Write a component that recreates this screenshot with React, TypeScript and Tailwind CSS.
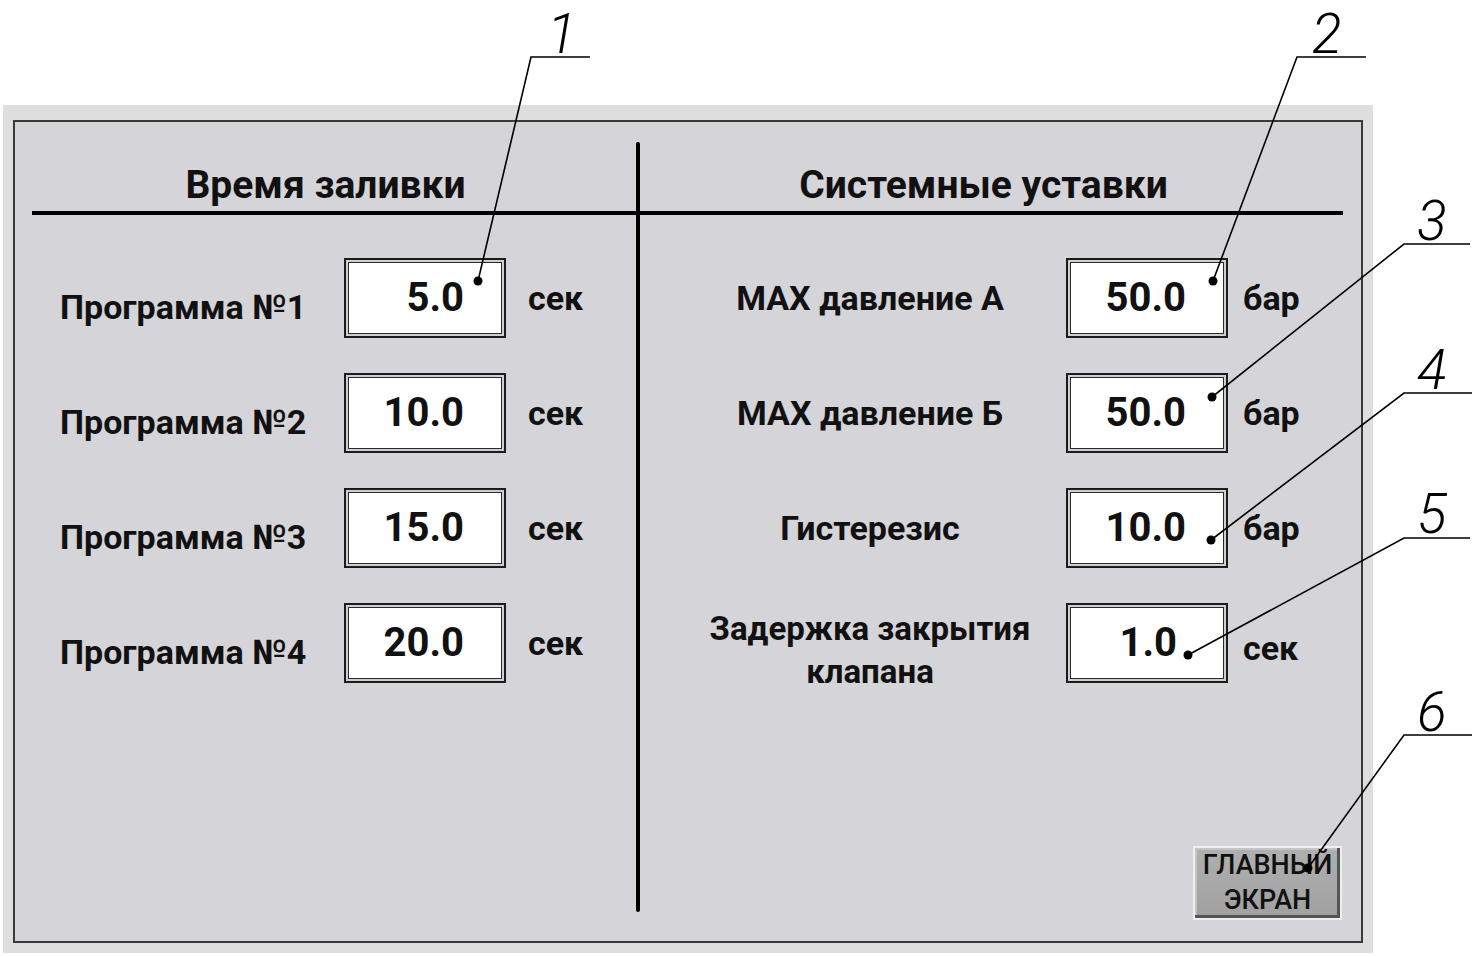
import React from 'react'

const ui = { fontFamily: 'Roboto, "DejaVu Sans", sans-serif' }

interface RowProps {
  label: React.ReactNode
  value: string
  unit: string
}

function ValueBox({ value, wide }: { value: string; wide?: boolean }) {
  return (
    <div className="w-[162px] h-[80px] shrink-0 border-2 border-[#1c1c1c] bg-[#cfcfcf] p-[2px]">
      <div
        className={
          wide
            ? 'w-full h-full border border-[#2a2a2a] bg-white flex items-center justify-end pr-[46px] text-[40px] font-bold text-[#111] leading-none'
            : 'w-full h-full border border-[#2a2a2a] bg-white flex items-center justify-end pr-[37px] text-[40px] font-bold text-[#111] leading-none'
        }
      >
        {value}
      </div>
    </div>
  )
}

function LeftRow({ label, value, unit }: RowProps) {
  return (
    <div className="flex items-center h-[80px]">
      <div className="w-[284px] mt-[18px] text-[34px] font-bold text-[#111] leading-none">{label}</div>
      <ValueBox value={value} />
      <div className="ml-[22px] text-[34px] font-bold text-[#111] leading-none">{unit}</div>
    </div>
  )
}

function RightRow({ label, value, unit, twoLine }: RowProps & { twoLine?: boolean }) {
  return (
    <div className="flex items-center h-[80px]">
      <div
        className={
          twoLine
            ? 'w-[340px] mt-[13px] text-center text-[33px] font-bold text-[#111] leading-[43px]'
            : 'w-[340px] text-center text-[34px] font-bold text-[#111] leading-none'
        }
      >
        {label}
      </div>
      <div className="ml-[26px]">
        <ValueBox value={value} wide={twoLine} />
      </div>
      <div className={twoLine ? 'ml-[15px] mt-[10px] text-[34px] font-bold text-[#111] leading-none' : 'ml-[15px] text-[34px] font-bold text-[#111] leading-none'}>
        {unit}
      </div>
    </div>
  )
}

function Leaders() {
  const num = { fontFamily: 'Roboto, "DejaVu Sans", sans-serif', fontStyle: 'italic', fontWeight: 300, fontSize: 55 }
  const items = [
    { d: 'M478 281 L531 57 L590 57', cx: 478, cy: 281, n: '1', tx: 547, ty: 53 },
    { d: 'M1213 281 L1297 57 L1366 57', cx: 1213, cy: 281, n: '2', tx: 1312, ty: 53 },
    { d: 'M1212 397 L1404 244 L1470 244', cx: 1212, cy: 397, n: '3', tx: 1417, ty: 240 },
    { d: 'M1211 540 L1404 393 L1472 393', cx: 1211, cy: 540, n: '4', tx: 1417, ty: 389 },
    { d: 'M1188 655 L1404 538 L1470 538', cx: 1188, cy: 655, n: '5', tx: 1417, ty: 533 },
    { d: 'M1308 868 L1404 735 L1472 735', cx: 1308, cy: 868, n: '6', tx: 1417, ty: 731 },
  ]
  return (
    <svg className="absolute inset-0 pointer-events-none" width="1474" height="957" viewBox="0 0 1474 957">
      {items.map((it) => (
        <g key={it.n}>
          <path d={it.d} fill="none" stroke="#000" strokeWidth="1.6" />
          <circle cx={it.cx} cy={it.cy} r="4.5" fill="#000" />
          <text x={it.tx} y={it.ty} style={num} fill="#000">
            {it.n}
          </text>
        </g>
      ))}
    </svg>
  )
}

export default function App() {
  return (
    <div className="relative w-[1474px] h-[957px] bg-white pt-[105px] pl-[3px] overflow-hidden" style={ui}>
      <div className="w-[1370px] h-[848px] bg-[#dedede] pt-[15px] pl-[10px]">
        <div className="w-[1350px] h-[823px] border-2 border-[#3a3a3a] bg-[#d5d4d9] flex">
          {/* left: pour time */}
          <div className="w-[621px] flex flex-col">
            <div className="h-[89px] pt-[38px] text-center text-[39px] font-bold text-[#111] leading-[50px]">
              Время заливки
            </div>
            <div className="ml-[17px] h-[4px] bg-black" />
            <div className="mt-[43px] pl-[45px] flex flex-col gap-[35px]">
              <LeftRow label="Программа №1" value="5.0" unit="сек" />
              <LeftRow label="Программа №2" value="10.0" unit="сек" />
              <LeftRow label="Программа №3" value="15.0" unit="сек" />
              <LeftRow label="Программа №4" value="20.0" unit="сек" />
            </div>
          </div>

          <div className="w-[4px] mt-[20px] h-[770px] bg-black rounded-full" />

          {/* right: system setpoints */}
          <div className="flex-1 flex flex-col">
            <div className="h-[89px] pt-[38px] pr-[34px] text-center text-[39px] font-bold text-[#111] leading-[50px]">
              Системные уставки
            </div>
            <div className="mr-[18px] h-[4px] bg-black" />
            <div className="mt-[43px] pl-[60px] flex flex-col gap-[35px]">
              <RightRow label="MAX давление А" value="50.0" unit="бар" />
              <RightRow label="MAX давление Б" value="50.0" unit="бар" />
              <RightRow label="Гистерезис" value="10.0" unit="бар" />
              <RightRow
                twoLine
                label={
                  <>
                    Задержка закрытия
                    <br />
                    клапана
                  </>
                }
                value="1.0"
                unit="сек"
              />
            </div>
            <div className="mt-auto mb-[21px] mr-[19px] self-end">
              <button className="w-[149px] h-[74px] border-2 border-[#efefef] bg-gradient-to-b from-[#b0b0b0] to-[#a0a0a0] shadow-[inset_-3px_-3px_0_#555555,inset_2px_2px_0_#c4c4c4] flex flex-col items-center justify-center text-[27px] font-medium text-[#111] leading-[35px]">
                <span>ГЛАВНЫЙ</span>
                <span>ЭКРАН</span>
              </button>
            </div>
          </div>
        </div>
      </div>
      <Leaders />
    </div>
  )
}
